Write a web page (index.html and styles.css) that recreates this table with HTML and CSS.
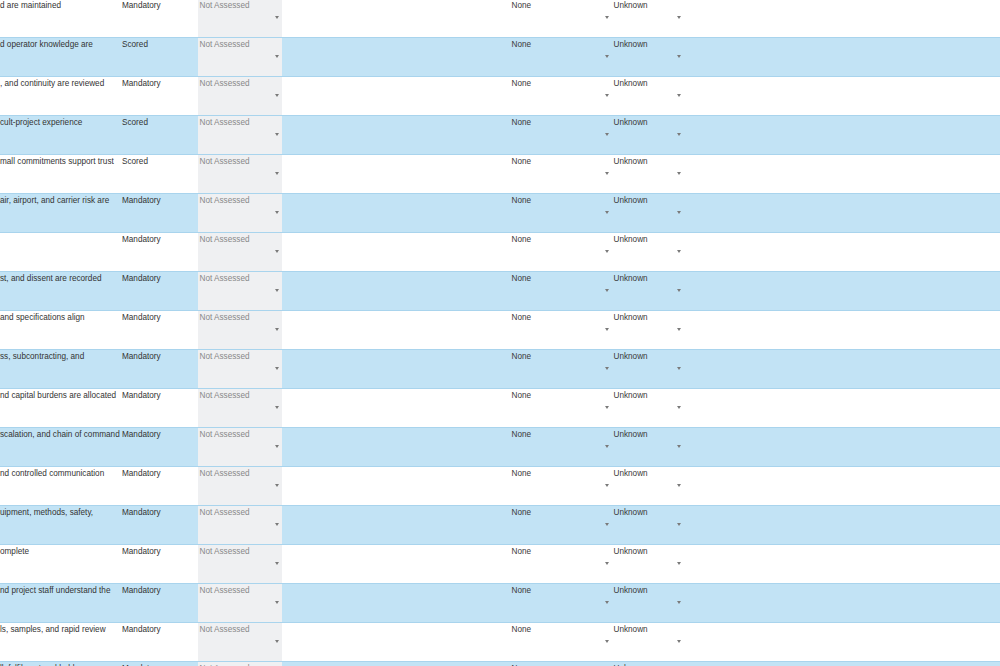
FILE: index.html
```html
<!DOCTYPE html>
<html lang="en">
<head>
<meta charset="utf-8">
<title>Assessment sheet</title>
<link rel="stylesheet" href="styles.css">
</head>
<body>
<div class="sheet">
  <div class="row">
    <div class="c-req">d are maintained</div><div class="c-type">Mandatory</div>
    <div class="c-status"><span class="val">Not Assessed</span><span class="arrow"></span></div><div class="c-notes"></div>
    <div class="c-sel c-risk"><span class="val">None</span><span class="arrow"></span></div><div class="c-sel c-conf"><span class="val">Unknown</span><span class="arrow"></span></div>
  </div>
  <div class="row alt">
    <div class="c-req">d operator knowledge are</div><div class="c-type">Scored</div>
    <div class="c-status"><span class="val">Not Assessed</span><span class="arrow"></span></div><div class="c-notes"></div>
    <div class="c-sel c-risk"><span class="val">None</span><span class="arrow"></span></div><div class="c-sel c-conf"><span class="val">Unknown</span><span class="arrow"></span></div>
  </div>
  <div class="row">
    <div class="c-req">, and continuity are reviewed</div><div class="c-type">Mandatory</div>
    <div class="c-status"><span class="val">Not Assessed</span><span class="arrow"></span></div><div class="c-notes"></div>
    <div class="c-sel c-risk"><span class="val">None</span><span class="arrow"></span></div><div class="c-sel c-conf"><span class="val">Unknown</span><span class="arrow"></span></div>
  </div>
  <div class="row alt">
    <div class="c-req">cult-project experience</div><div class="c-type">Scored</div>
    <div class="c-status"><span class="val">Not Assessed</span><span class="arrow"></span></div><div class="c-notes"></div>
    <div class="c-sel c-risk"><span class="val">None</span><span class="arrow"></span></div><div class="c-sel c-conf"><span class="val">Unknown</span><span class="arrow"></span></div>
  </div>
  <div class="row">
    <div class="c-req">mall commitments support trust</div><div class="c-type">Scored</div>
    <div class="c-status"><span class="val">Not Assessed</span><span class="arrow"></span></div><div class="c-notes"></div>
    <div class="c-sel c-risk"><span class="val">None</span><span class="arrow"></span></div><div class="c-sel c-conf"><span class="val">Unknown</span><span class="arrow"></span></div>
  </div>
  <div class="row alt">
    <div class="c-req">air, airport, and carrier risk are</div><div class="c-type">Mandatory</div>
    <div class="c-status"><span class="val">Not Assessed</span><span class="arrow"></span></div><div class="c-notes"></div>
    <div class="c-sel c-risk"><span class="val">None</span><span class="arrow"></span></div><div class="c-sel c-conf"><span class="val">Unknown</span><span class="arrow"></span></div>
  </div>
  <div class="row">
    <div class="c-req"></div><div class="c-type">Mandatory</div>
    <div class="c-status"><span class="val">Not Assessed</span><span class="arrow"></span></div><div class="c-notes"></div>
    <div class="c-sel c-risk"><span class="val">None</span><span class="arrow"></span></div><div class="c-sel c-conf"><span class="val">Unknown</span><span class="arrow"></span></div>
  </div>
  <div class="row alt">
    <div class="c-req">st, and dissent are recorded</div><div class="c-type">Mandatory</div>
    <div class="c-status"><span class="val">Not Assessed</span><span class="arrow"></span></div><div class="c-notes"></div>
    <div class="c-sel c-risk"><span class="val">None</span><span class="arrow"></span></div><div class="c-sel c-conf"><span class="val">Unknown</span><span class="arrow"></span></div>
  </div>
  <div class="row">
    <div class="c-req">and specifications align</div><div class="c-type">Mandatory</div>
    <div class="c-status"><span class="val">Not Assessed</span><span class="arrow"></span></div><div class="c-notes"></div>
    <div class="c-sel c-risk"><span class="val">None</span><span class="arrow"></span></div><div class="c-sel c-conf"><span class="val">Unknown</span><span class="arrow"></span></div>
  </div>
  <div class="row alt">
    <div class="c-req">ss, subcontracting, and</div><div class="c-type">Mandatory</div>
    <div class="c-status"><span class="val">Not Assessed</span><span class="arrow"></span></div><div class="c-notes"></div>
    <div class="c-sel c-risk"><span class="val">None</span><span class="arrow"></span></div><div class="c-sel c-conf"><span class="val">Unknown</span><span class="arrow"></span></div>
  </div>
  <div class="row">
    <div class="c-req">nd capital burdens are allocated</div><div class="c-type">Mandatory</div>
    <div class="c-status"><span class="val">Not Assessed</span><span class="arrow"></span></div><div class="c-notes"></div>
    <div class="c-sel c-risk"><span class="val">None</span><span class="arrow"></span></div><div class="c-sel c-conf"><span class="val">Unknown</span><span class="arrow"></span></div>
  </div>
  <div class="row alt">
    <div class="c-req">scalation, and chain of command</div><div class="c-type">Mandatory</div>
    <div class="c-status"><span class="val">Not Assessed</span><span class="arrow"></span></div><div class="c-notes"></div>
    <div class="c-sel c-risk"><span class="val">None</span><span class="arrow"></span></div><div class="c-sel c-conf"><span class="val">Unknown</span><span class="arrow"></span></div>
  </div>
  <div class="row">
    <div class="c-req">nd controlled communication</div><div class="c-type">Mandatory</div>
    <div class="c-status"><span class="val">Not Assessed</span><span class="arrow"></span></div><div class="c-notes"></div>
    <div class="c-sel c-risk"><span class="val">None</span><span class="arrow"></span></div><div class="c-sel c-conf"><span class="val">Unknown</span><span class="arrow"></span></div>
  </div>
  <div class="row alt">
    <div class="c-req">uipment, methods, safety,</div><div class="c-type">Mandatory</div>
    <div class="c-status"><span class="val">Not Assessed</span><span class="arrow"></span></div><div class="c-notes"></div>
    <div class="c-sel c-risk"><span class="val">None</span><span class="arrow"></span></div><div class="c-sel c-conf"><span class="val">Unknown</span><span class="arrow"></span></div>
  </div>
  <div class="row">
    <div class="c-req">omplete</div><div class="c-type">Mandatory</div>
    <div class="c-status"><span class="val">Not Assessed</span><span class="arrow"></span></div><div class="c-notes"></div>
    <div class="c-sel c-risk"><span class="val">None</span><span class="arrow"></span></div><div class="c-sel c-conf"><span class="val">Unknown</span><span class="arrow"></span></div>
  </div>
  <div class="row alt">
    <div class="c-req">nd project staff understand the</div><div class="c-type">Mandatory</div>
    <div class="c-status"><span class="val">Not Assessed</span><span class="arrow"></span></div><div class="c-notes"></div>
    <div class="c-sel c-risk"><span class="val">None</span><span class="arrow"></span></div><div class="c-sel c-conf"><span class="val">Unknown</span><span class="arrow"></span></div>
  </div>
  <div class="row">
    <div class="c-req">ls, samples, and rapid review</div><div class="c-type">Mandatory</div>
    <div class="c-status"><span class="val">Not Assessed</span><span class="arrow"></span></div><div class="c-notes"></div>
    <div class="c-sel c-risk"><span class="val">None</span><span class="arrow"></span></div><div class="c-sel c-conf"><span class="val">Unknown</span><span class="arrow"></span></div>
  </div>
  <div class="row alt">
    <div class="c-req">ll, fulfilment and holdover</div><div class="c-type">Mandatory</div>
    <div class="c-status"><span class="val">Not Assessed</span><span class="arrow"></span></div><div class="c-notes"></div>
    <div class="c-sel c-risk"><span class="val">None</span><span class="arrow"></span></div><div class="c-sel c-conf"><span class="val">Unknown</span><span class="arrow"></span></div>
  </div>
</div>
</body>
</html>
```
FILE: styles.css
```css
html, body {
  margin: 0;
  padding: 0;
  background: #ffffff;
  overflow: hidden;
}

body {
  width: 1000px;
  height: 666px;
  font-family: "Liberation Sans", Arial, Helvetica, sans-serif;
  font-size: 8.2px;
  line-height: 10px;
  color: #333333;
}

.sheet {
  margin-top: -1px;
}

.row {
  display: grid;
  grid-template-columns: 120px 78px 84px 228px 102px 72px 1fr;
  height: 38px;
  border-bottom: 1px solid #a9d4ed;
  background: #ffffff;
}

.row.alt {
  background: #c2e3f5;
}

.c-req {
  padding: 2px 0 0 0;
  white-space: nowrap;
  overflow: hidden;
}

.c-type {
  padding: 2px 0 0 2px;
  white-space: nowrap;
}

.c-status {
  background: #eff0f2;
  color: #888888;
  display: flex;
  flex-direction: column;
  padding: 2px 3px 0 1.5px;
}

.c-sel {
  display: flex;
  flex-direction: column;
  padding: 2px 3.5px 0 1.5px;
  color: #3a3a3a;
}

.val {
  white-space: nowrap;
}

.arrow {
  align-self: flex-end;
  margin-top: 5px;
  width: 0;
  height: 0;
  border-left: 2.5px solid transparent;
  border-right: 2.5px solid transparent;
  border-top: 3.5px solid #7a7a7a;
}
```
